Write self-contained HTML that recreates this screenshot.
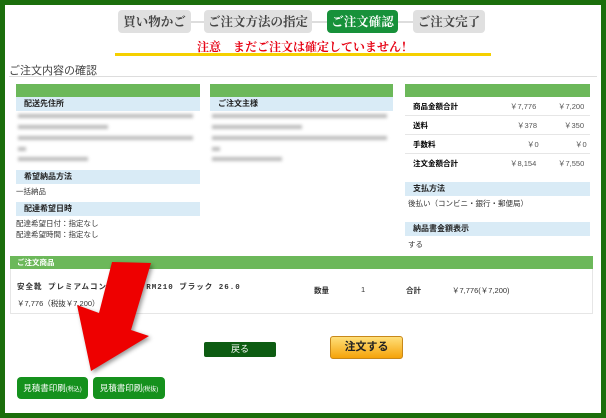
<!DOCTYPE html>
<html><head><meta charset="utf-8"><style>
*{margin:0;padding:0;box-sizing:border-box}
body{width:606px;height:418px;background:#1b6e0c;font-family:"Liberation Sans","Noto Sans CJK JP",sans-serif;position:relative;overflow:hidden}
.in{position:absolute;left:5px;top:5px;width:596px;height:408px;background:#fff}
.a{position:absolute}
.tab{position:absolute;top:10px;height:23px;border-radius:4px;background:#e0e0e0;color:#444;font-family:"Noto Serif CJK SC",serif;font-size:12.5px;font-weight:bold;line-height:23px;text-align:center;white-space:nowrap}
.conn{position:absolute;top:21px;height:2px;background:#ddd}
.g{position:absolute;height:13px;background:#6cb85a}
.b{position:absolute;height:14px;background:#d9ebf6;font-size:8px;font-weight:bold;line-height:14px;padding-left:8px;color:#222}
.t{position:absolute;font-size:7.5px;color:#333;white-space:nowrap}
.bl{position:absolute;height:4px;background:#bbb;filter:blur(1.5px)}
.row{position:absolute;left:405px;width:185px;height:19px;border-bottom:1px solid #e6e6e6;font-size:7.5px;line-height:19px}
.row b{position:absolute;left:8px}
.row span{position:absolute;color:#555}
</style></head><body>
<div class="in"></div>
<div class="conn" style="left:180px;width:240px"></div>
<div class="tab" style="left:118px;width:73px">買い物かご</div>
<div class="tab" style="left:204px;width:108px">ご注文方法の指定</div>
<div class="tab" style="left:327px;width:71px;background:#17913a;color:#fff">ご注文確認</div>
<div class="tab" style="left:413px;width:72px">ご注文完了</div>
<div class="a" style="left:197px;top:38px;font-size:12px;color:#e60012;font-weight:bold;font-family:'Noto Serif CJK SC',serif;white-space:pre">注意　まだご注文は確定していません！</div>
<div class="a" style="left:115px;top:53px;width:376px;height:3px;background:#f5d000"></div>
<div class="a" style="left:9px;top:62px;font-size:11px;color:#444">ご注文内容の確認</div>
<div class="a" style="left:9px;top:76px;width:588px;height:1px;background:#ddd"></div>

<div class="g" style="left:16px;top:84px;width:184px"></div>
<div class="b" style="left:16px;top:97px;width:184px">配送先住所</div>
<div class="bl" style="left:18px;top:114px;width:175px"></div>
<div class="bl" style="left:18px;top:125px;width:90px"></div>
<div class="bl" style="left:18px;top:136px;width:175px"></div>
<div class="bl" style="left:18px;top:147px;width:8px"></div>
<div class="bl" style="left:18px;top:157px;width:70px"></div>
<div class="b" style="left:16px;top:170px;width:184px">希望納品方法</div>
<div class="t" style="left:16px;top:186px">一括納品</div>
<div class="b" style="left:16px;top:202px;width:184px">配達希望日時</div>
<div class="t" style="left:16px;top:218px">配達希望日付：指定なし</div>
<div class="t" style="left:16px;top:229px">配達希望時間：指定なし</div>

<div class="g" style="left:210px;top:84px;width:183px"></div>
<div class="b" style="left:210px;top:97px;width:183px">ご注文主様</div>
<div class="bl" style="left:212px;top:114px;width:175px"></div>
<div class="bl" style="left:212px;top:125px;width:90px"></div>
<div class="bl" style="left:212px;top:136px;width:175px"></div>
<div class="bl" style="left:212px;top:147px;width:8px"></div>
<div class="bl" style="left:212px;top:157px;width:70px"></div>

<div class="g" style="left:405px;top:84px;width:185px"></div>
<div class="row" style="top:97px"><b>商品金額合計</b><span style="left:105px">￥7,776</span><span style="left:153px">￥7,200</span></div>
<div class="row" style="top:116px"><b>送料</b><span style="left:112px">￥378</span><span style="left:159px">￥350</span></div>
<div class="row" style="top:135px"><b>手数料</b><span style="left:122px">￥0</span><span style="left:170px">￥0</span></div>
<div class="row" style="top:154px;border:none"><b>注文金額合計</b><span style="left:105px">￥8,154</span><span style="left:153px">￥7,550</span></div>
<div class="b" style="left:405px;top:182px;width:185px">支払方法</div>
<div class="t" style="left:408px;top:198px">後払い（コンビニ・銀行・郵便局）</div>
<div class="b" style="left:405px;top:222px;width:185px">納品書金額表示</div>
<div class="t" style="left:408px;top:239px">する</div>

<div class="a" style="left:10px;top:256px;width:583px;height:58px;border:1px solid #e6e6e6"></div>
<div class="a" style="left:10px;top:256px;width:583px;height:13px;background:#6cb85a;color:#fff;font-size:7.5px;font-weight:bold;line-height:13px;padding-left:7px">ご注文商品</div>
<div class="t" style="left:17px;top:281px;font-weight:bold;font-family:'Liberation Mono','Noto Sans CJK JP',monospace;letter-spacing:1px">安全靴 プレミアムコンフォート RM210 ブラック 26.0</div>
<div class="t" style="left:17px;top:298px">￥7,776（税抜￥7,200）</div>
<div class="t" style="left:314px;top:285px;font-weight:bold">数量</div>
<div class="t" style="left:361px;top:285px">1</div>
<div class="t" style="left:406px;top:285px;font-weight:bold">合計</div>
<div class="t" style="left:452px;top:285px">￥7,776(￥7,200)</div>

<div class="a" style="left:204px;top:342px;width:72px;height:15px;background:#0d5c12;border-radius:2px;color:#fff;font-size:9px;text-align:center;line-height:15px">戻る</div>
<div class="a" style="left:330px;top:336px;width:73px;height:23px;background:linear-gradient(#ffdf7a,#f5a30a);border:1px solid #c8881a;border-radius:3px;color:#222;font-size:11px;font-weight:bold;text-align:center;line-height:21px">注文する</div>
<div class="a" style="left:17px;top:377px;width:71px;height:22px;background:#15911d;border-radius:4px;color:#fff;font-size:8.5px;line-height:22px;text-align:center">見積書印刷<small style="font-size:6px">(税込)</small></div>
<div class="a" style="left:93px;top:377px;width:72px;height:22px;background:#15911d;border-radius:4px;color:#fff;font-size:8.5px;line-height:22px;text-align:center">見積書印刷<small style="font-size:6px">(税抜)</small></div>

<svg class="a" style="left:0;top:0" width="606" height="418"><polygon points="112,262 151,263 131,330 149,336 91,371 77,305 99,313" fill="#ee0000" style="filter:drop-shadow(2px 2px 2px rgba(0,0,0,.4))"/></svg>
</body></html>
